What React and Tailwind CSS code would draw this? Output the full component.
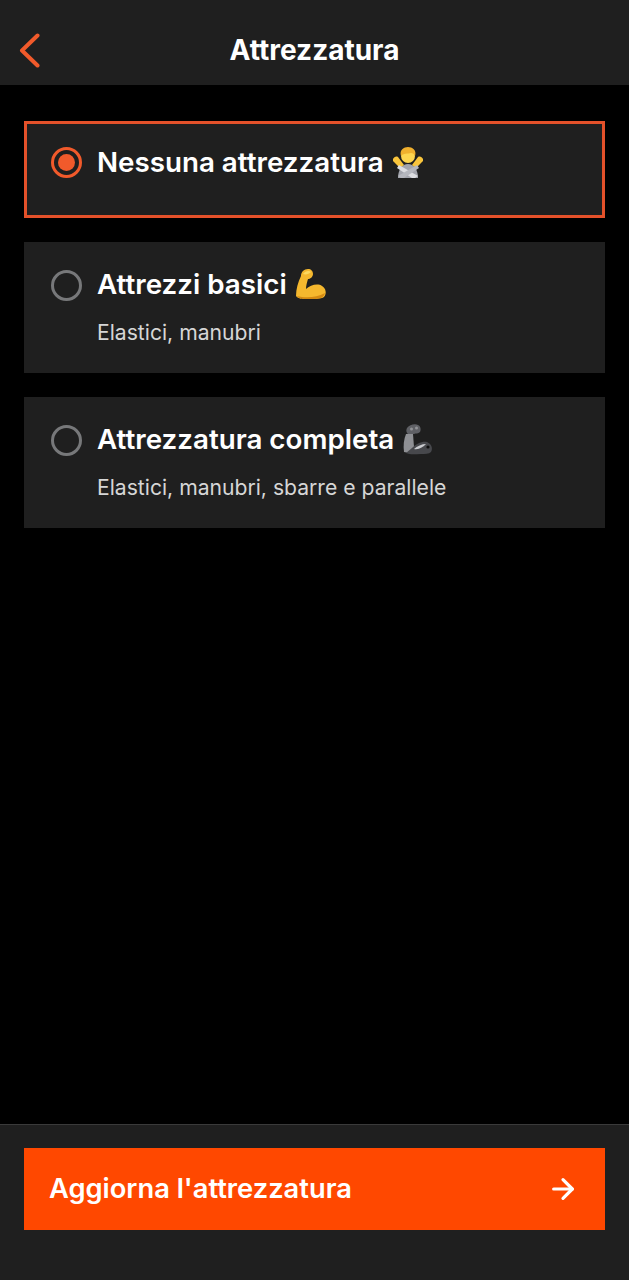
import { ArrowRight } from 'lucide-react';

function NoGoodEmoji() {
  return (
    <svg width="30" height="32" viewBox="0 0 30 32" className="shrink-0">
      <path d="M5 32c0-8 4-14 10-14s10 6 10 14z" fill="#a3a5ad" />
      <path d="M0 13c1-2 3-3 5-2l6 8-4 3-6-6c-1-1-2-2-1-3z" fill="#f9c53c" />
      <path d="M30 13c-1-2-3-3-5-2l-6 8 4 3 6-6c1-1 2-2 1-3z" fill="#f9c53c" />
      <path d="M6 19l19 11-3 2H19L4 22z" fill="#dcdde1" />
      <path d="M24 19L5 30l3 2h3l15-10z" fill="#b5b7be" />
      <circle cx="15" cy="10" r="7" fill="#fdd54f" />
      <path d="M8 10C6 4 11 1 15 1s9 3 7 9c-1-2-2-3-4-3-3 1-8 0-10 3z" fill="#f0b02e" />
    </svg>
  );
}

function BicepsEmoji() {
  return (
    <svg width="31" height="30" viewBox="0 0 31 30" className="shrink-0">
      <path d="M0 27C0 20 2 13 5 7 5 3 8 0 12 0c3 0 5 2 5 5s-3 5-5 5c-1 3-2 7-2 10 4-4 12-6 16-3 4 2 5 8 2 11-3 2-10 2-16 2-5 0-10 0-12-3z" fill="#f5b82e" />
      <path d="M1 27c8 2 19 2 28-3-1 3-2 4-4 5-3 1-8 1-13 1-5 0-9 0-11-3z" fill="#d48a12" />
      <path d="M7 5c2-3 6-4 8-2-2 2-5 3-8 2z" fill="#fdd95f" />
    </svg>
  );
}

function MechanicalArmEmoji() {
  return (
    <svg width="30" height="31" viewBox="0 0 30 31" className="shrink-0">
      <path d="M4 4c2-3 8-5 11-3 3 1 3 5 2 7-2 2-4 1-6 2H5C3 8 3 6 4 4z" fill="#5f6065" />
      <path d="M7 5a1.5 1.5 0 1 0 3 0 1.5 1.5 0 1 0-3 0zM12 4a1.5 1.5 0 1 0 3 0 1.5 1.5 0 1 0-3 0z" fill="#929397" />
      <path d="M3 10h7l1 13-5 6-5-1C0 21 1 15 3 10z" fill="#8f9094" />
      <path d="M9 24c4-4 10-7 15-6 5 2 6 7 4 10-2 2-6 2-10 2-5 0-11 1-15-1z" fill="#47484c" />
      <path d="M11 25c3-3 8-5 12-5-3 3-7 6-12 5z" fill="#c9cace" />
      <circle cx="25" cy="23" r="1.6" fill="#0e0e0e" />
    </svg>
  );
}

function Radio({ checked }) {
  return (
    <div className={`w-[31px] h-[31px] rounded-full border-[3px] flex items-center justify-center shrink-0 ${checked ? 'border-[#f15a2b]' : 'border-[#77787a] mt-[3px]'}`}>
      {checked && <div className="w-[17px] h-[17px] rounded-full bg-[#f15a2b]" />}
    </div>
  );
}

function Option({ title, subtitle, icon, selected }) {
  return (
    <div className={selected
      ? 'h-[97px] bg-[#1f1f1f] border-[3px] border-[#e4512a] pl-6 pr-6 pt-[22px]'
      : 'h-[131px] bg-[#1f1f1f] pl-[27px] pr-6 pt-[25px]'}
    >
      <div className="flex items-center gap-[15px]">
        <Radio checked={selected} />
        <div className="flex items-center gap-[9px] text-[27.75px] leading-[32px] font-semibold text-white">
          <span>{title}</span>
          {icon}
        </div>
      </div>
      {subtitle && (
        <p className="ml-[46px] mt-[20px] text-[21.15px] leading-[24px] text-[#d6d6d6]">{subtitle}</p>
      )}
    </div>
  );
}

export default function App() {
  return (
    <div className="w-[629px] h-[1280px] bg-black flex flex-col font-['Inter',sans-serif]">
      <header className="h-[85px] bg-[#1f1f1f] flex items-center justify-center relative pt-[14px] shrink-0">
        <svg className="absolute left-[18px] top-[33px]" width="24" height="35" viewBox="0 0 24 35" fill="none">
          <path d="M19.5 2.5 L4 17.5 L19.5 32.5" stroke="#f15a2b" strokeWidth="4" strokeLinecap="round" strokeLinejoin="round" />
        </svg>
        <h1 className="text-[28px] font-bold text-white">Attrezzatura</h1>
      </header>
      <main className="flex-1 flex flex-col gap-6 px-6 pt-9">
        <Option selected title="Nessuna attrezzatura" icon={<NoGoodEmoji />} />
        <Option title="Attrezzi basici" subtitle="Elastici, manubri" icon={<BicepsEmoji />} />
        <Option title="Attrezzatura completa" subtitle="Elastici, manubri, sbarre e parallele" icon={<MechanicalArmEmoji />} />
      </main>
      <footer className="h-[156px] bg-[#1f1f1f] border-t border-[#3a3a3a] px-6 pt-[23px] shrink-0">
        <button className="w-full h-[82px] bg-[#ff4800] flex items-center justify-between pl-[25px] pr-[26px] text-white">
          <span className="text-[27.3px] font-semibold">Aggiorna l'attrezzatura</span>
          <ArrowRight size={32} strokeWidth={2.4} />
        </button>
      </footer>
    </div>
  );
}
